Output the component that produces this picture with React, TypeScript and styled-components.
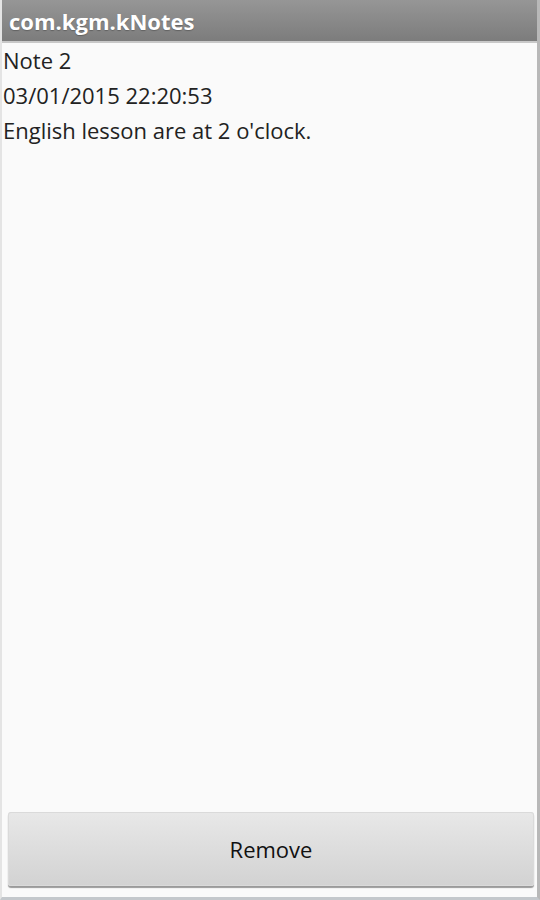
import styled, { createGlobalStyle } from "styled-components";

const Global = createGlobalStyle`
  html, body { margin: 0; padding: 0; }
  body { background: #fafafa; font-family: "Open Sans", "DejaVu Sans", sans-serif; }
`;

const Screen = styled.div`
  width: 540px;
  height: 900px;
  box-sizing: border-box;
  display: flex;
  flex-direction: column;
  background: #fafafa;
  border-left: 2px solid #e4e4e4;
  border-right: 3px solid #b8b8b8;
  border-bottom: 3px solid #c4c8cc;
`;

const TitleBar = styled.div`
  height: 41px;
  flex: none;
  display: flex;
  align-items: center;
  padding-left: 7px;
  background: linear-gradient(#969696, #7c7c7c);
  border-bottom: 2px solid #c8c8c8;
  color: #fff;
  font-size: 22px;
  font-weight: 700;
  text-shadow: 0 1px 1px rgba(0, 0, 0, 0.25);
`;

const Body = styled.div`
  flex: 1;
  padding: 0 0 0 1px;
  color: #222;
  font-size: 22px;
`;

const Line = styled.div`
  line-height: 35px;
`;

const Footer = styled.div`
  flex: none;
  padding: 0 3px 11px 6px;
`;

const Button = styled.button`
  width: 100%;
  height: 74px;
  border: none;
  border-radius: 3px;
  background: linear-gradient(#e8e8e8, #d2d2d2);
  box-shadow: 0 2px 1px #9a9a9a, inset 0 0 0 1px #dadada;
  font-family: inherit;
  font-size: 22px;
  color: #111;
`;

export default function App() {
  return (
    <>
      <Global />
      <Screen>
        <TitleBar>com.kgm.kNotes</TitleBar>
        <Body>
          <Line>Note 2</Line>
          <Line>03/01/2015 22:20:53</Line>
          <Line>English lesson are at 2 o'clock.</Line>
        </Body>
        <Footer>
          <Button>Remove</Button>
        </Footer>
      </Screen>
    </>
  );
}
